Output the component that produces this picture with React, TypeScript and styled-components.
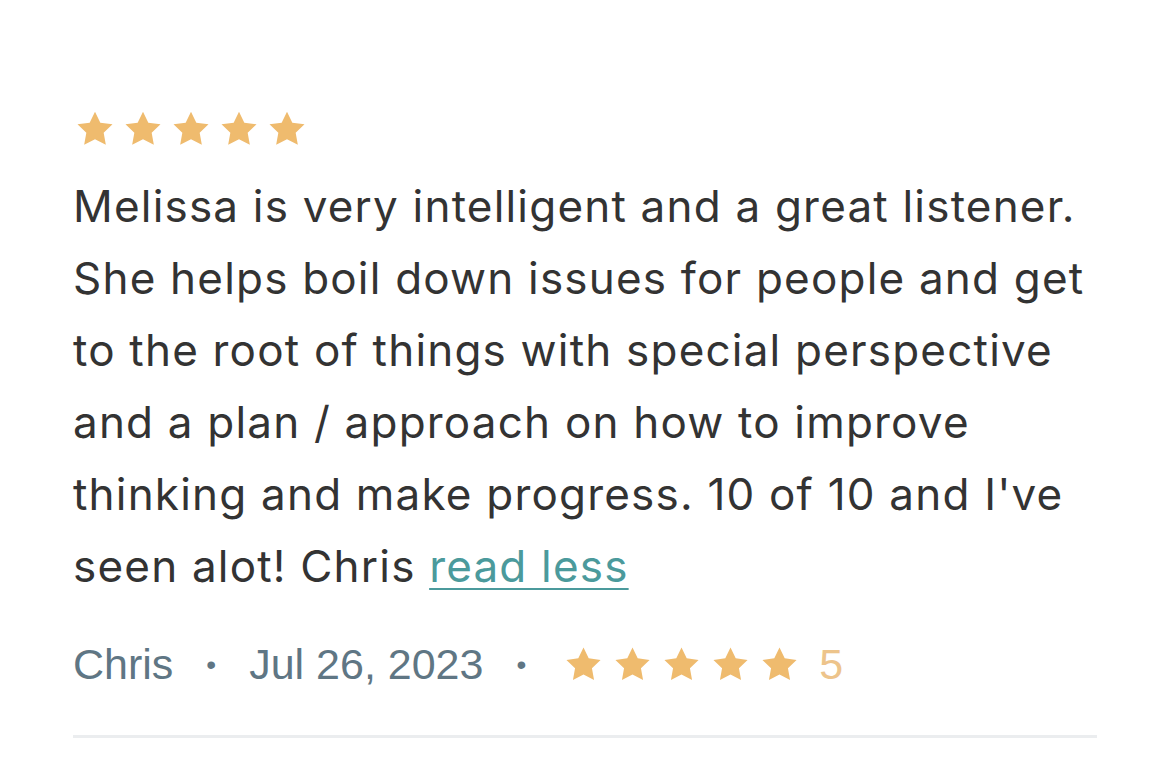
import styled, { createGlobalStyle } from "styled-components";

const GlobalStyle = createGlobalStyle`
  html, body {
    margin: 0;
    padding: 0;
    background: #ffffff;
  }
  body {
    font-family: Inter, "Open Sans", sans-serif;
    -webkit-font-smoothing: antialiased;
  }
`;

const STAR_PATH =
  "M12 1.6l3.2 6.6 7.3 1-5.3 5.1 1.3 7.2L12 18.1l-6.5 3.4 1.3-7.2-5.3-5.1 7.3-1z";

const Star = ({ size }: { size: number }) => (
  <svg width={size} height={size} viewBox="0 0 24 24" aria-hidden="true">
    <path d={STAR_PATH} fill="#efbb6e" />
  </svg>
);

const Stars = ({ size, gap }: { size: number; gap: number }) => (
  <StarRow $gap={gap}>
    {[0, 1, 2, 3, 4].map((i) => (
      <Star key={i} size={size} />
    ))}
  </StarRow>
);

export default function App() {
  return (
    <>
      <GlobalStyle />
      <Page>
        <Review>
          <TopStars>
            <Stars size={40} gap={8} />
          </TopStars>
          <Body>
            Melissa is very intelligent and a great listener. She helps boil
            down issues for people and get to the root of things with special
            perspective and a plan / approach on how to improve thinking and
            make progress. 10 of 10 and I've seen alot! Chris{" "}
            <ReadLess href="#">read less</ReadLess>
          </Body>
          <Meta>
            <Author>Chris</Author>
            <Dot>•</Dot>
            <DateText>Jul 26, 2023</DateText>
            <Dot>•</Dot>
            <MetaStars>
              <Stars size={39} gap={10} />
            </MetaStars>
            <Score>5</Score>
          </Meta>
        </Review>
        <Divider />
      </Page>
    </>
  );
}

const Page = styled.main`
  padding: 109px 73px 0 73px;
  max-width: 1024px;
`;

const Review = styled.article`
  display: flex;
  flex-direction: column;
`;

const StarRow = styled.div<{ $gap: number }>`
  display: flex;
  align-items: center;
  gap: ${(p) => p.$gap}px;
`;

const TopStars = styled.div`
  margin-left: 2px;
`;

const Body = styled.p`
  margin: 21px 0 0 0;
  font-size: 44px;
  line-height: 72px;
  color: #333333;
  letter-spacing: 1.2px;
`;

const ReadLess = styled.a`
  color: #4b9a9c;
  text-decoration: underline;
  text-underline-offset: 6px;
  text-decoration-thickness: 2px;
`;

const Meta = styled.div`
  display: flex;
  align-items: center;
  margin-top: 38px;
  font-family: "Liberation Sans", Arial, sans-serif;
  font-size: 43px;
  color: #5f7684;
`;

const Author = styled.span``;

const DateText = styled.span``;

const Dot = styled.span`
  font-size: 28px;
  margin: 0 33px;
`;

const MetaStars = styled.div`
  margin-left: 5px;
`;

const Score = styled.span`
  margin-left: 20px;
  color: #edc48b;
`;

const Divider = styled.hr`
  margin: 46px 0 0 0;
  border: none;
  height: 3px;
  background: #ebedef;
`;
